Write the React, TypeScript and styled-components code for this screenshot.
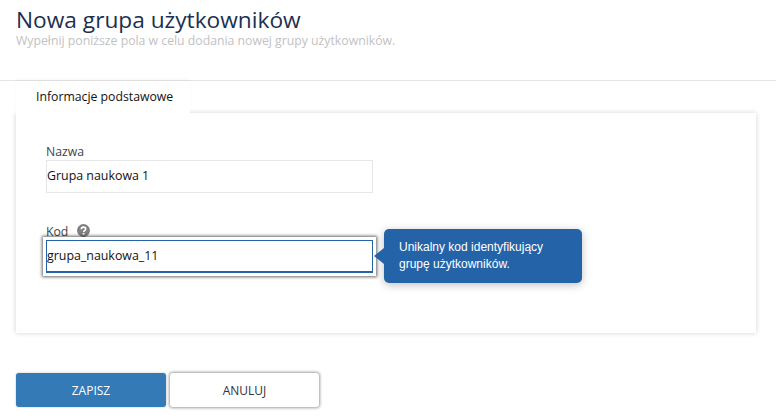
import styled, { createGlobalStyle } from 'styled-components';

const GlobalStyle = createGlobalStyle`
  html, body {
    margin: 0;
    padding: 0;
    background: #fff;
  }
  body {
    font-family: 'Open Sans', sans-serif;
    overflow: hidden;
  }
`;

const Page = styled.div`
  width: 776px;
  height: 416px;
  overflow: hidden;
`;

const Header = styled.header`
  height: 81px;
  box-sizing: border-box;
  padding: 5px 16px 0;
  border-bottom: 1px solid #e4e4e4;
`;

const Title = styled.h1`
  margin: 0;
  font-size: 22.7px;
  line-height: 29px;
  font-weight: 400;
  color: #1b3050;
`;

const Subtitle = styled.p`
  margin: 0;
  font-size: 12.25px;
  line-height: 13px;
  color: #c2c2c2;
`;

const Content = styled.main`
  padding: 0 20px 0 16px;
`;

const Tab = styled.div`
  width: 174px;
  height: 32px;
  box-sizing: border-box;
  padding: 7px 0 0 20px;
  position: relative;
  z-index: 1;
  background: #fff;
  font-size: 12.25px;
  line-height: 18px;
  font-weight: 500;
  color: #111;
  box-shadow: 0 -2px 3px rgba(0, 0, 0, 0.03);
`;

const Card = styled.section`
  height: 220px;
  box-sizing: border-box;
  padding: 30px 30px 0;
  background: #fff;
  box-shadow: 0 0 5px rgba(0, 0, 0, 0.18);
`;

const Field = styled.div<{ $gap?: number }>`
  width: 327px;
  margin-bottom: ${(p) => p.$gap ?? 0}px;
  position: relative;
`;

const LabelRow = styled.div`
  display: flex;
  align-items: center;
  gap: 9px;
  height: 17px;
`;

const Label = styled.label`
  display: block;
  font-size: 12.25px;
  line-height: 17px;
  color: #444;
`;

const HelpIcon = styled.svg`
  width: 13px;
  height: 13px;
  display: block;
  margin-top: -2px;
`;

const Input = styled.input<{ $focused?: boolean }>`
  display: block;
  width: 100%;
  height: 33px;
  box-sizing: border-box;
  margin: 0;
  padding: 0 0 2px;
  border-radius: 0;
  outline: none;
  font-family: 'Open Sans', sans-serif;
  font-size: 12.4px;
  color: #111;
  background: #fff;
  border: 1px solid #e6e6e6;
  ${(p) =>
    p.$focused &&
    `
    position: relative;
    border: 1px solid #2563a8;
    border-bottom-width: 2px;
    box-shadow: 0 0 0 3px #fff, 0 0 3px 4px rgba(0, 0, 0, 0.6);
  `}
`;

const Tooltip = styled.div`
  position: absolute;
  left: 338px;
  top: 6px;
  width: 198px;
  height: 54px;
  box-sizing: border-box;
  padding: 10px 15px;
  border-radius: 5px;
  background: #2563a8;
  color: #fff;
  font-family: 'Liberation Sans', Arial, sans-serif;
  font-size: 12px;
  line-height: 17px;
  box-shadow: 0 2px 8px rgba(0, 0, 0, 0.25);

  &::before {
    content: '';
    position: absolute;
    left: -10px;
    top: 19px;
    border-style: solid;
    border-width: 8px 10px 8px 0;
    border-color: transparent #2563a8 transparent transparent;
  }
`;

const Actions = styled.div`
  display: flex;
  gap: 4px;
  margin-top: 40px;
`;

const Button = styled.button<{ $primary?: boolean }>`
  width: ${(p) => (p.$primary ? 150 : 149)}px;
  height: 34px;
  padding: 0;
  border-radius: 3px;
  font-family: 'Open Sans', sans-serif;
  font-size: 12px;
  font-weight: 500;
  border: none;
  color: ${(p) => (p.$primary ? '#fff' : '#333')};
  background: ${(p) => (p.$primary ? '#337ab7' : '#fff')};
  box-shadow: ${(p) =>
    p.$primary ? '0 0 2px rgba(0, 0, 0, 0.3)' : '0 0 3px 1px rgba(0, 0, 0, 0.38)'};
`;

export default function App() {
  return (
    <Page>
      <GlobalStyle />
      <Header>
        <Title>Nowa grupa użytkowników</Title>
        <Subtitle>Wypełnij poniższe pola w celu dodania nowej grupy użytkowników.</Subtitle>
      </Header>
      <Content>
        <Tab>Informacje podstawowe</Tab>
        <Card>
          <Field $gap={30}>
            <Label>Nazwa</Label>
            <Input defaultValue="Grupa naukowa 1" />
          </Field>
          <Field>
            <LabelRow>
              <Label>Kod</Label>
              <HelpIcon viewBox="0 0 24 24">
                <circle cx="12" cy="12" r="12" fill="#808080" />
                <path
                  d="M8 9.5C8 7 10 5.8 12 5.8s4 1.2 4 3.5c0 3-3.8 3-3.8 5.5"
                  fill="none"
                  stroke="#fff"
                  strokeWidth="3"
                />
                <rect x="10.5" y="16.5" width="3.2" height="3.2" fill="#fff" />
              </HelpIcon>
            </LabelRow>
            <Input $focused defaultValue="grupa_naukowa_11" />
            <Tooltip>
              Unikalny kod identyfikujący
              <br />
              grupę użytkowników.
            </Tooltip>
          </Field>
        </Card>
        <Actions>
          <Button $primary>ZAPISZ</Button>
          <Button>ANULUJ</Button>
        </Actions>
      </Content>
    </Page>
  );
}
